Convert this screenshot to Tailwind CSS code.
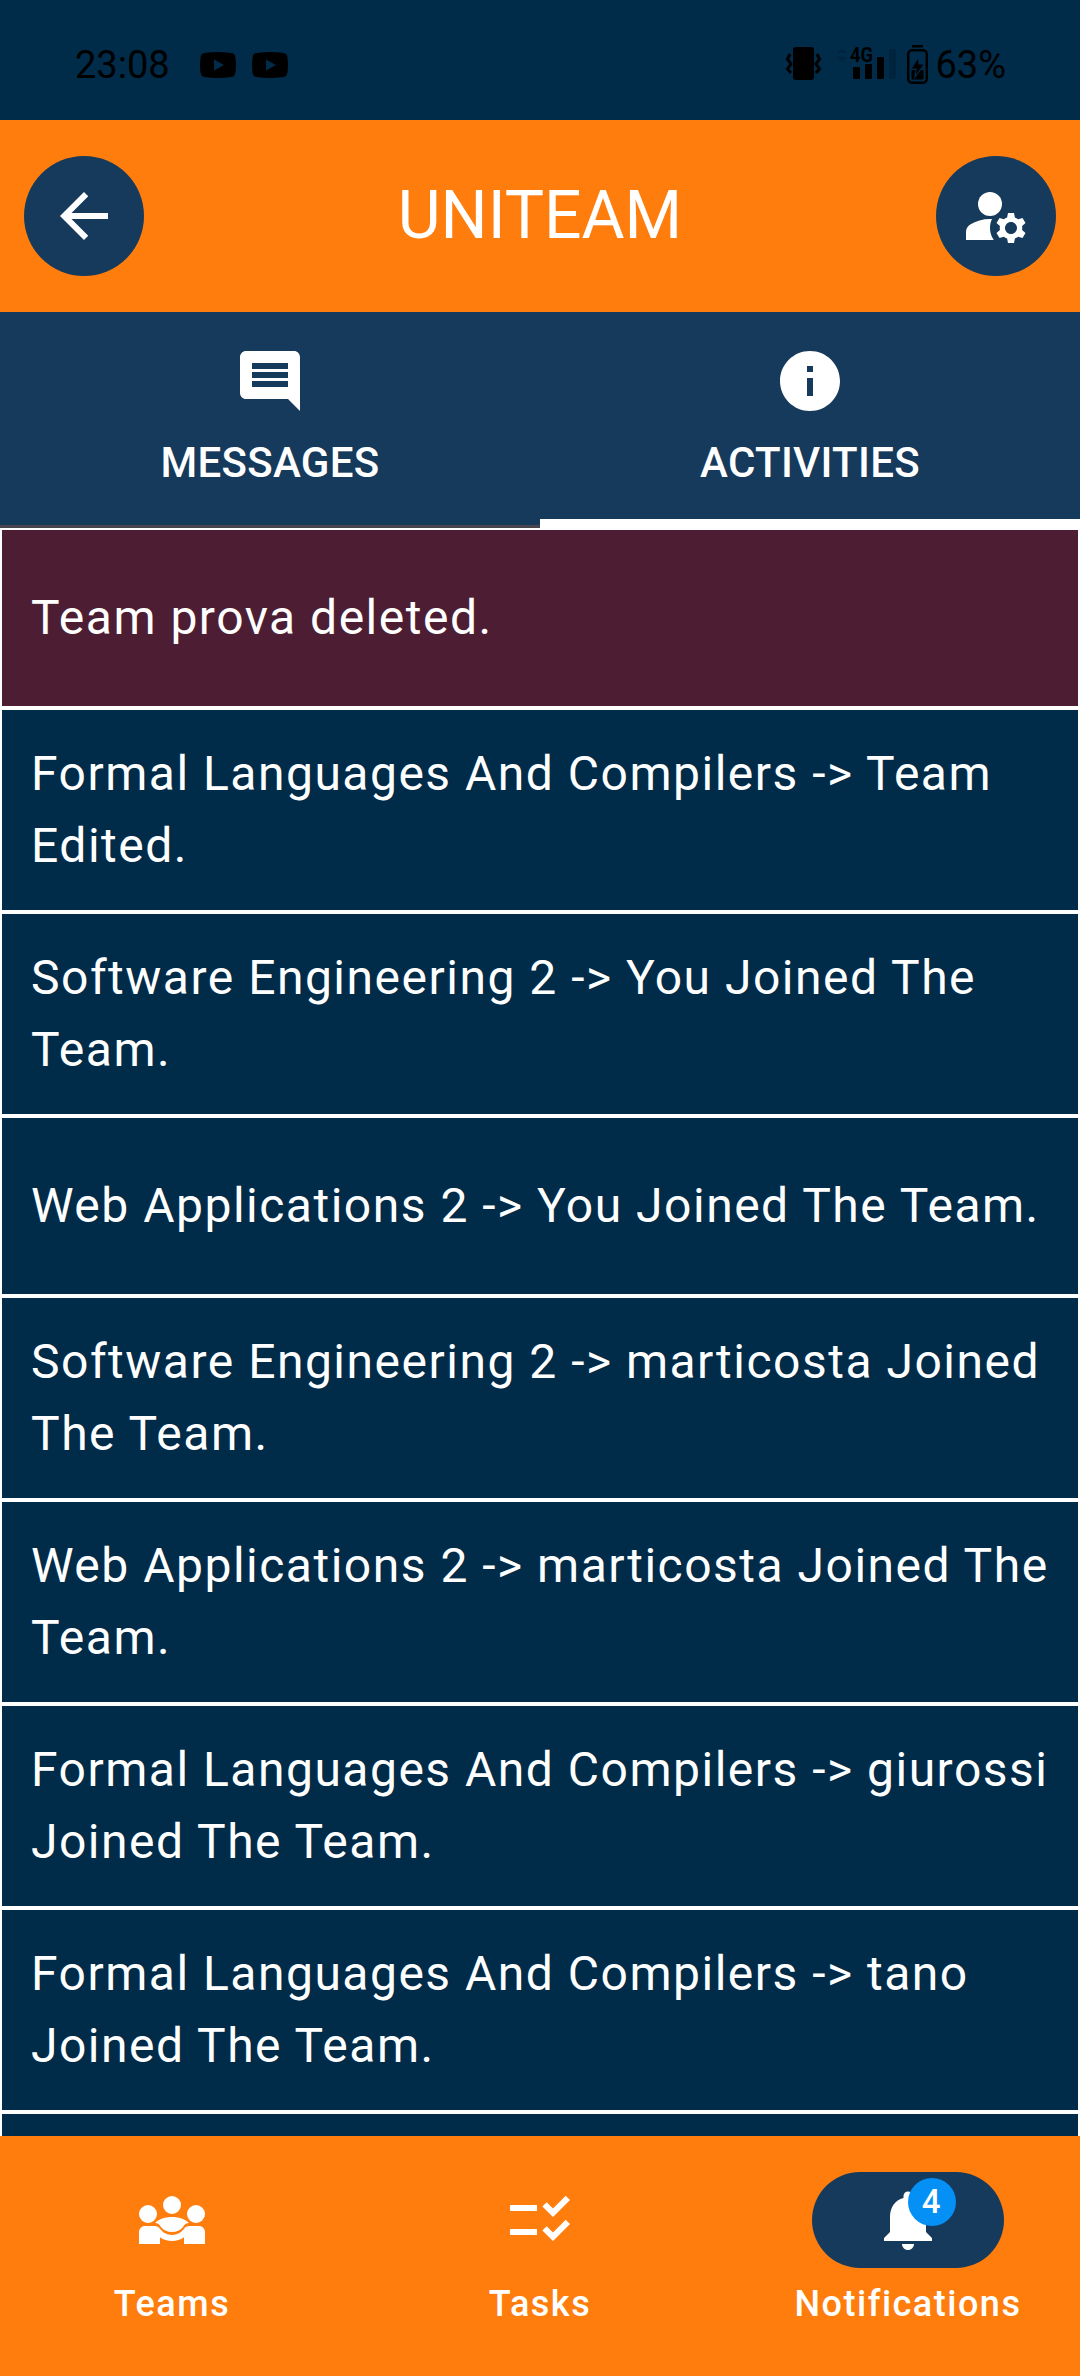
<!DOCTYPE html>
<html lang="en">
<head>
<meta charset="utf-8">
<title>Uniteam</title>
<script src="https://cdn.jsdelivr.net/npm/@tailwindcss/browser@4"></script>
</head>
<body class="bg-[#002b49] font-['Roboto',sans-serif] text-white">
<div class="flex h-[2376px] w-[1080px] flex-col overflow-hidden">

  <!-- Status bar -->
  <div class="flex h-[120px] shrink-0 items-center justify-between pt-[10px] pr-[74px] pl-[75px] text-[38px] leading-none text-black">
    <div class="flex items-center">
      <span class="w-[125px]">23:08</span>
      <svg class="h-[26px] w-[36px]" viewBox="0 0 36 26"><path fill-rule="evenodd" d="M5 1Q18-1 31 1Q35 1 35.500 6Q36.500 13 35.500 20Q35 25 31 25Q18 27 5 25Q1 25 .5 20Q-.5 13 .5 6Q1 1 5 1zM14 7.500v11l10-5.500z"/></svg>
      <svg class="ml-4 h-[26px] w-[36px]" viewBox="0 0 36 26"><path fill-rule="evenodd" d="M5 1Q18-1 31 1Q35 1 35.500 6Q36.500 13 35.500 20Q35 25 31 25Q18 27 5 25Q1 25 .5 20Q-.5 13 .5 6Q1 1 5 1zM14 7.500v11l10-5.500z"/></svg>
    </div>
    <div class="flex items-center">
      <svg class="h-[40px] w-[149px] overflow-visible" viewBox="0 0 149 40">
        <rect x="7" y="2" width="21" height="33" rx="3"/>
        <path d="M4 9l-2.500 5 3.500 5-3.500 5 3.500 4M31 9l2.500 5-3.500 5 3.500 5-3.500 4" fill="none" stroke="#000" stroke-width="3"/>
        <path d="M51 8l5-5 5 5zM51 12h10l-5 5z" fill="#00243e"/>
        <text x="64" y="17" font-family="Roboto" font-size="21" font-weight="700" textLength="23" lengthAdjust="spacingAndGlyphs">4G</text>
        <rect x="67" y="22" width="7" height="12" rx="1"/><rect x="79" y="19" width="7" height="15" rx="1"/><rect x="91" y="12" width="7" height="22" rx="1"/>
        <rect x="103" y="4" width="7" height="30" rx="1" fill="#00243e"/>
        <rect x="126" y="0" width="11" height="2.500"/>
        <rect x="122.200" y="5.200" width="18.600" height="32.600" rx="4" fill="none" stroke="#000" stroke-width="2.400"/>
        <rect x="125.500" y="25" width="12" height="9.500" rx="1"/>
        <path d="M132.500 12l-7.500 12h5l-1 8 9.500-13h-5.500z" stroke="#002b49" stroke-width="1.200"/>
      </svg>
      <span>63%</span>
    </div>
  </div>

  <!-- App bar -->
  <header class="flex h-[192px] shrink-0 items-center justify-between bg-[#ff7d0d] px-6">
    <button class="flex size-[120px] items-center justify-center rounded-full bg-[#163a5c]">
      <svg class="size-[72px]" viewBox="0 0 24 24" fill="#fff"><path d="M20 11H7.830l5.590-5.590L12 4l-8 8 8 8 1.410-1.410L7.830 13H20v-2z"/></svg>
    </button>
    <h1 class="text-[66px] leading-[84px]">UNITEAM</h1>
    <button class="flex size-[120px] items-center justify-center rounded-full bg-[#163a5c]">
      <svg class="size-[72px]" viewBox="0 0 24 24" fill="#fff"><circle cx="10" cy="8" r="4"/><path d="M10.670 13.020C10.450 13.010 10.230 13 10 13c-2.420 0-4.680.67-6.610 1.820C2.510 15.340 2 16.320 2 17.350V20h9.260C10.470 18.870 10 17.490 10 16c0-1.070.25-2.070.67-2.980z"/><path d="M20.750 16c0-.22-.03-.42-.06-.63l1.140-1.010-1-1.730-1.450.49c-.32-.27-.68-.48-1.080-.63L18 11h-2l-.3 1.490c-.4.15-.76.36-1.080.63l-1.450-.49-1 1.730 1.140 1.010c-.03.21-.06.41-.06.63s.03.42.06.63l-1.140 1.010 1 1.730 1.450-.49c.32.27.68.48 1.080.63L16 21h2l.3-1.490c.4-.15.76-.36 1.080-.63l1.450.49 1-1.730-1.140-1.010c.03-.21.06-.41.06-.63zM17 18c-1.100 0-2-.9-2-2s.9-2 2-2 2 .9 2 2-.9 2-2 2z"/></svg>
    </button>
  </header>

  <!-- Tabs -->
  <nav class="grid h-[216px] shrink-0 grid-cols-2 bg-[#163a5c] text-[42px] leading-[60px] font-medium tracking-[0.3px]">
    <div class="flex flex-col items-center border-b-[3px] border-[#49454f] pt-[33px]">
      <svg class="size-[72px]" viewBox="0 0 24 24" fill="#fff"><path d="M21.990 4c0-1.100-.89-2-1.990-2H4c-1.100 0-2 .9-2 2v12c0 1.100.9 2 2 2h14l4 4-.01-18zM18 14H6v-2h12v2zm0-3H6V9h12v2zm0-3H6V6h12v2z"/></svg>
      <span class="mt-4">MESSAGES</span>
    </div>
    <div class="flex flex-col items-center border-b-[9px] border-white pt-[33px]">
      <svg class="size-[72px]" viewBox="0 0 24 24" fill="#fff"><path d="M12 2C6.480 2 2 6.480 2 12s4.480 10 10 10 10-4.480 10-10S17.520 2 12 2zm1 15h-2v-6h2v6zm0-8h-2V7h2v2z"/></svg>
      <span class="mt-4">ACTIVITIES</span>
    </div>
  </nav>

  <!-- Activity list -->
  <main class="min-h-0 flex-1 overflow-hidden text-[48px] leading-[72px] tracking-[1.5px]">
    <div class="flex h-[180px] items-center border-2 border-white bg-[#4d1e33] px-[29px]">Team prova deleted.</div>
    <div class="flex h-[204px] items-center border-2 border-white px-[29px]"><p class="whitespace-nowrap">Formal Languages And Compilers -&gt; Team<br>Edited.</p></div>
    <div class="flex h-[204px] items-center border-2 border-white px-[29px]"><p class="whitespace-nowrap">Software Engineering 2 -&gt; You Joined The<br>Team.</p></div>
    <div class="flex h-[180px] items-center border-2 border-white px-[29px]"><p class="whitespace-nowrap">Web Applications 2 -&gt; You Joined The Team.</p></div>
    <div class="flex h-[204px] items-center border-2 border-white px-[29px]"><p class="whitespace-nowrap">Software Engineering 2 -&gt; marticosta Joined<br>The Team.</p></div>
    <div class="flex h-[204px] items-center border-2 border-white px-[29px]"><p class="whitespace-nowrap">Web Applications 2 -&gt; marticosta Joined The<br>Team.</p></div>
    <div class="flex h-[204px] items-center border-2 border-white px-[29px]"><p class="whitespace-nowrap">Formal Languages And Compilers -&gt; giurossi<br>Joined The Team.</p></div>
    <div class="flex h-[204px] items-center border-2 border-white px-[29px]"><p class="whitespace-nowrap">Formal Languages And Compilers -&gt; tano<br>Joined The Team.</p></div>
    <div class="h-[180px] border-2 border-white"></div>
  </main>

  <!-- Bottom navigation -->
  <nav class="grid h-[240px] shrink-0 grid-cols-3 gap-6 bg-[#ff7d0d] pt-9 text-[36px] leading-[48px] font-medium tracking-[1.5px]">
    <div class="flex flex-col items-center gap-3">
      <div class="flex h-24 w-48 items-center justify-center">
        <svg class="size-[72px]" viewBox="0 0 24 24" fill="#fff"><circle cx="4" cy="10" r="3"/><circle cx="20" cy="10" r="3"/><circle cx="12" cy="7" r="3"/><path d="M6.320 13.010C7.500 11.700 9.700 11 12 11s4.500.7 5.680 2.010c-.96.020-1.500.54-1.990 1.300C14.800 15.400 13.500 16 12 16s-2.800-.6-3.690-1.690c-.49-.76-1.030-1.280-1.990-1.300z"/><path d="M1 20v-4c0-1.100.9-2 2-2h3.270c.68 0 1.320.35 1.700.93C8.900 16.200 10.400 17 12 17s3.100-.8 4.030-2.070c.38-.58 1.020-.93 1.700-.93H21c1.100 0 2 .9 2 2v4h-7v-2.260c-1.150.83-2.540 1.260-4 1.260s-2.850-.43-4-1.260V20z"/></svg>
      </div>
      <span>Teams</span>
    </div>
    <div class="flex flex-col items-center gap-3">
      <div class="flex h-24 w-48 items-center justify-center">
        <svg class="size-[72px]" viewBox="0 0 24 24" fill="#fff"><path d="M11 7H2v2h9V7zm0 8H2v2h9v-2zm5.340-4l-3.540-3.540 1.410-1.410 2.120 2.120 4.240-4.240L22 5.340 16.340 11zm0 8l-3.540-3.540 1.410-1.410 2.120 2.120 4.240-4.240L22 13.340 16.340 19z"/></svg>
      </div>
      <span>Tasks</span>
    </div>
    <div class="flex flex-col items-center gap-3">
      <div class="relative flex h-24 w-48 items-center justify-center rounded-full bg-[#163a5c]">
        <svg class="size-[72px]" viewBox="0 0 24 24" fill="#fff"><path d="M12 22c1.100 0 2-.9 2-2h-4c0 1.100.89 2 2 2zm6-6v-5c0-3.070-1.640-5.640-4.500-6.320V4c0-.83-.67-1.500-1.500-1.500s-1.500.67-1.500 1.500v.68C7.630 5.360 6 7.920 6 11v5l-2 2v1h16v-1l-2-2z"/></svg>
        <span class="absolute top-1.5 left-24 flex size-12 items-center justify-center rounded-full bg-[#0490f5] text-[33px] leading-[48px]">4</span>
      </div>
      <span>Notifications</span>
    </div>
  </nav>
</div>
</body>
</html>
